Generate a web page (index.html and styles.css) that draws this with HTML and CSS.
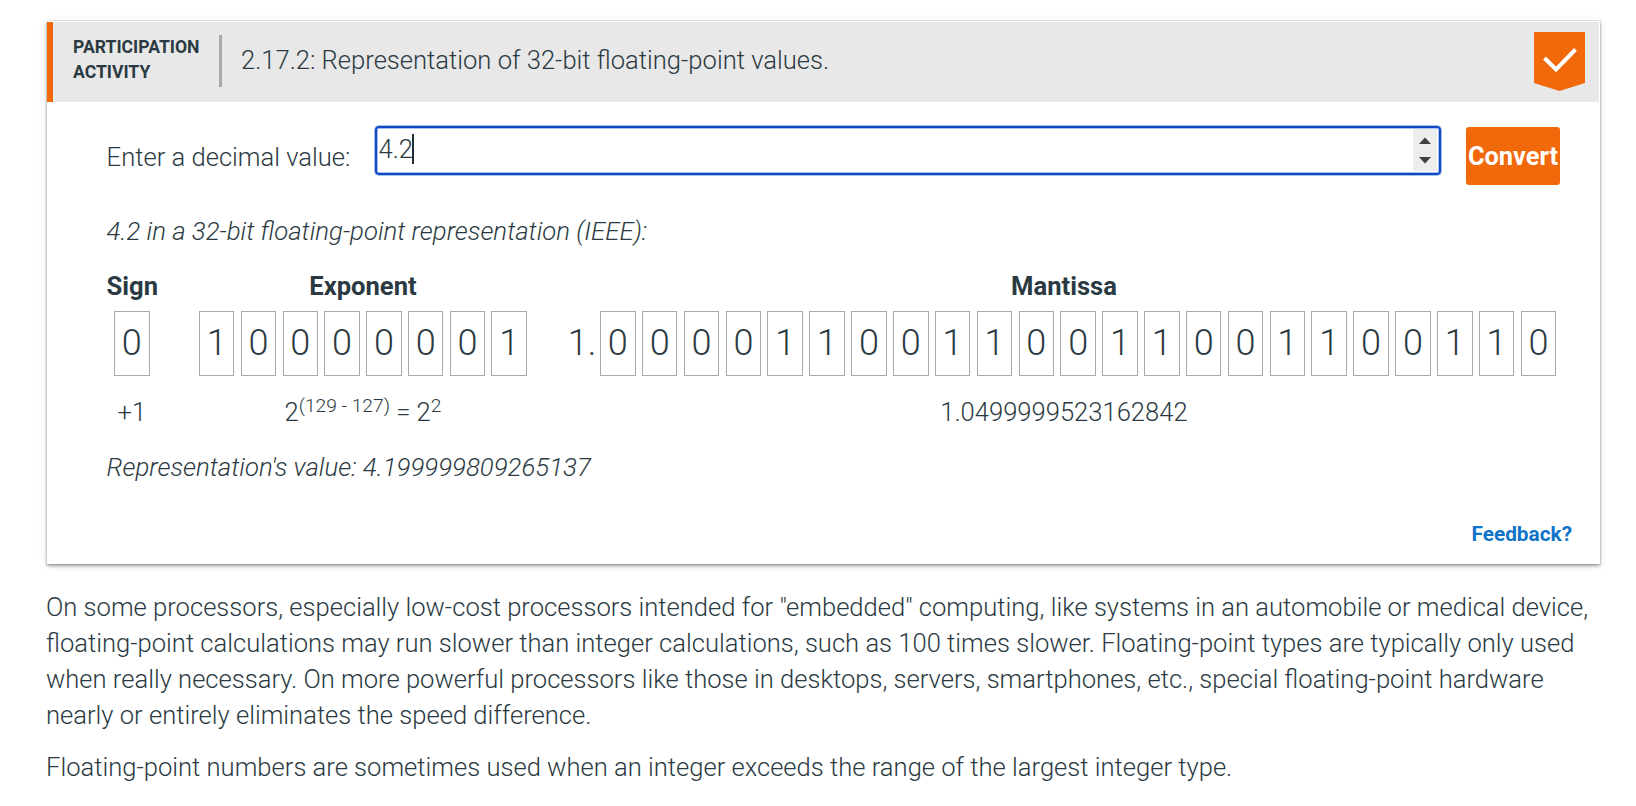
FILE: index.html
```html
<!DOCTYPE html>
<html lang="en">
<head>
<meta charset="utf-8">
<title>Representation of 32-bit floating-point values</title>
<link rel="stylesheet" href="styles.css">
</head>
<body>
<section class="activity">
  <header class="activity-header">
    <div class="activity-type">PARTICIPATION<br>ACTIVITY</div>
    <div class="divider"></div>
    <h1 class="activity-title">2.17.2: Representation of 32-bit floating-point values.</h1>
    <svg class="badge" width="51" height="59" viewBox="0 0 51 59">
      <path d="M0 0H51V51L25.5 59L0 51Z" fill="#f1690a"/>
      <path d="M10.500 26L22 37.500L41.500 17.500" fill="none" stroke="#fff" stroke-width="4"/>
    </svg>
  </header>
  <div class="activity-body">
    <div class="entry">
      <label class="entry-label">Enter a decimal value:</label>
      <div class="number-input">
        <span class="number-value">4.2</span><span class="caret"></span>
        <svg class="spinner" width="24" height="42" viewBox="0 0 24 42">
          <rect width="24" height="42" fill="#ededed"/>
          <path d="M6 15H18L12 8.500ZM6 28H18L12 34.500Z" fill="#404040"/>
        </svg>
      </div>
      <button class="convert">Convert</button>
    </div>
    <p class="note intro">4.2 in a 32-bit floating-point representation (IEEE):</p>
    <div class="parts">
      <div class="part sign">
        <div class="part-name">Sign</div>
        <div class="bits"><span>0</span></div>
        <div class="part-value">+1</div>
      </div>
      <div class="part exponent">
        <div class="part-name">Exponent</div>
        <div class="bits"><span>1</span><span>0</span><span>0</span><span>0</span><span>0</span><span>0</span><span>0</span><span>1</span></div>
        <div class="part-value">2<sup>(129 - 127)</sup> = 2<sup>2</sup></div>
      </div>
      <div class="part mantissa">
        <div class="part-name">Mantissa</div>
        <div class="bits"><b class="lead">1.</b><span>0</span><span>0</span><span>0</span><span>0</span><span>1</span><span>1</span><span>0</span><span>0</span><span>1</span><span>1</span><span>0</span><span>0</span><span>1</span><span>1</span><span>0</span><span>0</span><span>1</span><span>1</span><span>0</span><span>0</span><span>1</span><span>1</span><span>0</span></div>
        <div class="part-value">1.0499999523162842</div>
      </div>
    </div>
    <p class="note result">Representation's value: 4.199999809265137</p>
    <div class="feedback"><a class="feedback-link">Feedback?</a></div>
  </div>
</section>
<p class="prose">On some processors, especially low-cost processors intended for "embedded" computing, like systems in an automobile or medical device, floating-point calculations may run slower than integer calculations, such as 100 times slower. Floating-point types are typically only used when really necessary. On more powerful processors like those in desktops, servers, smartphones, etc., special floating-point hardware nearly or entirely eliminates the speed difference.</p>
<p class="prose">Floating-point numbers are sometimes used when an integer exceeds the range of the largest integer type.</p>
</body>
</html>
```
FILE: styles.css
```css
* { box-sizing: border-box; }
body {
  margin: 0;
  padding: 21px 36px 0 46px;
  background: #fff;
  color: #2b3a42;
  font: 300 25.58px/36px Roboto, sans-serif;
}
p, h1 { margin: 0; font-size: 25.58px; font-weight: 300; }
.activity {
  width: 1553px;
  height: 543px;
  margin: 0 0 25px 1px;
  padding: 1px 1px 1px 0;
  background: #fff;
  box-shadow: 0 0 0 1px rgba(0,0,0,.07), 0 2px 3px rgba(0,0,0,.34), 0 1px 10px rgba(0,0,0,.09);
}
.activity-header {
  display: flex;
  height: 80px;
  padding: 0 14px 0 20px;
  border-left: 6px solid #f1690a;
  background: #e8e8e8;
}
.activity-type {
  width: 146px;
  padding-top: 13px;
  font-size: 17.6px;
  font-weight: 700;
  line-height: 25px;
}
.divider { width: 3px; height: 52px; margin-top: 13px; background: #aaa; }
.activity-title { flex: 1; margin: 20px 0 0 19px; }
.badge { margin-top: 10px; }
.activity-body { padding: 24px 27px 0 59.6px; }
.entry { display: flex; height: 59px; align-items: flex-start; }
.entry-label { width: 268.4px; padding-top: 13px; }
.number-input {
  display: flex;
  width: 1066px;
  height: 49px;
  padding: 1px 2px 1px 1.5px;
  border: 2px solid #0f48c4;
  border-radius: 4px;
  box-shadow: 0 0 0 1px #a9c0ee, inset 0 0 0 1px #a9c0ee;
}
.number-value { padding-top: 2px; }
.caret { width: 2px; height: 30px; margin: 5px 0 0 -1px; background: #1f2d35; }
.spinner { margin-left: auto; }
.convert {
  width: 94px;
  height: 58px;
  margin: 1px 0 0 25px;
  padding: 0;
  border: 0;
  border-radius: 3px;
  background: #f1690a;
  color: #fff;
  font: 700 25.4px/58px Roboto, sans-serif;
}
.note { font-size: 25.8px; font-style: italic; }
.intro { margin-top: 28px; }
.parts { display: flex; margin-top: 19px; }
.part { text-align: center; }
.part-name { font-weight: 700; }
.sign { width: 50.4px; }
.exponent { width: 328px; margin-left: 42px; }
.mantissa { width: 990px; margin-left: 40px; }
.mantissa .part-name, .mantissa .part-value { padding-left: 4px; }
.bits {
  display: flex;
  justify-content: center;
  gap: 6.3px;
  margin: 7px 0 18px;
  font-size: 36px;
  line-height: 63px;
}
.bits span { width: 35.560px; height: 65px; border: 1px solid #aaa; }
.bits .lead { width: 26px; font-weight: 300; line-height: 65px; }
.sign .bits span { width: 36px; }
.part-value { height: 36px; }
sup { font-size: 19.2px; line-height: 0; position: relative; top: -9px; vertical-align: baseline; }
.result { margin-top: 19px; }
.feedback { padding-top: 33px; text-align: right; font-size: 20.8px; line-height: 32px; }
.feedback-link { color: #0f74c9; font-weight: 700; }
.prose { width: 1554px; margin-bottom: 16px; }
```
